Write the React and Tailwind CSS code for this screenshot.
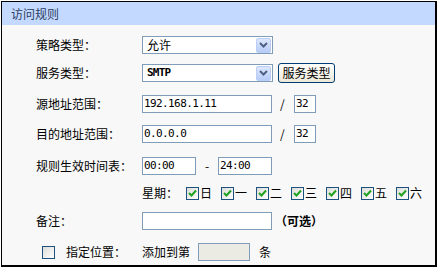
import React from "react";

const cjk = { fontFamily: '"Noto Sans CJK SC", "Noto Sans", sans-serif' };
const mono = { fontFamily: '"DejaVu Sans Mono", "Liberation Mono", monospace' };

const Arrow = () => (
  <span className="ml-auto mr-[1px] flex h-[15px] w-[15px] items-center justify-center rounded-[2px] border border-[#b9cdf5] bg-gradient-to-b from-[#dde7fd] to-[#b7ccf8]">
    <svg width="9" height="6" viewBox="0 0 9 6">
      <path d="M1 1 L4.5 4.5 L8 1" fill="none" stroke="#4d6185" strokeWidth="2" />
    </svg>
  </span>
);

const Select = ({ children, textStyle, className = "" }) => (
  <div className="flex h-[18px] w-[131px] items-center border border-[#7f9db9] bg-white pl-[4px]">
    <span className={className} style={textStyle}>
      {children}
    </span>
    <Arrow />
  </div>
);

const Input = ({ value = "", w = "w-[130px]", disabled = false }) => (
  <div
    className={`flex h-[18px] ${w} items-center border border-[#7f9db9] pl-[1px] text-[11px] tracking-[-0.6px] text-black ${
      disabled ? "bg-[#ebebe4]" : "bg-white"
    }`}
    style={mono}
  >
    {value}
  </div>
);

const Check = ({ checked = true }) => (
  <span className="flex h-[13px] w-[13px] items-center justify-center border border-[#1c5180] bg-gradient-to-br from-[#dcdcd7] to-white">
    {checked && (
      <svg width="9" height="8" viewBox="0 0 9 8">
        <path d="M1 4 L3.5 6.5 L8 1.5" fill="none" stroke="#21a121" strokeWidth="2" />
      </svg>
    )}
  </span>
);

const Label = ({ children }) => <span className="w-[106px] shrink-0">{children}</span>;

const days = ["日", "一", "二", "三", "四", "五", "六"];

export default function App() {
  return (
    <div className="h-[269px] w-[438px] bg-white p-[1px]" style={cjk}>
      <div className="h-[266px] w-[436px] border border-r-2 border-b-2 border-black bg-[#f8f8f8] text-[12px] text-black">
        <div className="flex h-[23px] items-center bg-[#c4d9ff] pl-[9px] text-[12px] text-[#2b3d64]">
          访问规则
        </div>

        <div className="pl-[34px]">
          <div className="mt-[11px] flex h-[18px] items-center">
            <Label>策略类型：</Label>
            <Select>允许</Select>
          </div>

          <div className="mt-[9px] flex h-[20px] items-center">
            <Label>服务类型：</Label>
            <Select className="text-[11px] font-bold tracking-[-0.8px]" textStyle={mono}>
              SMTP
            </Select>
            <button className="ml-[5px] h-[20px] w-[57px] rounded-[3px] border border-[#003c74] bg-gradient-to-b from-white to-[#ece9d8] text-[12px] leading-none text-black">
              服务类型
            </button>
          </div>

          <div className="mt-[12px] flex h-[18px] items-center">
            <Label>源地址范围：</Label>
            <Input value="192.168.1.11" />
            <span className="ml-[8px] w-[14px]">/</span>
            <Input value="32" w="w-[22px]" />
          </div>

          <div className="mt-[12px] flex h-[18px] items-center">
            <Label>目的地址范围：</Label>
            <Input value="0.0.0.0" />
            <span className="ml-[8px] w-[14px]">/</span>
            <Input value="32" w="w-[22px]" />
          </div>

          <div className="mt-[14px] flex h-[18px] items-center">
            <Label>规则生效时间表：</Label>
            <Input value="00:00" w="w-[54px]" />
            <span className="ml-[9px] w-[13px]">-</span>
            <Input value="24:00" w="w-[54px]" />
          </div>

          <div className="mt-[9px] flex h-[18px] items-center">
            <span className="w-[106px] shrink-0" />
            <span className="w-[44px]">星期：</span>
            {days.map((d) => (
              <span key={d} className="flex w-[35px] items-center gap-[1px]">
                <Check />
                <span>{d}</span>
              </span>
            ))}
          </div>

          <div className="mt-[10px] flex h-[18px] items-center">
            <Label>备注：</Label>
            <Input />
            <span className="ml-[3px] font-bold">（可选）</span>
          </div>

          <div className="mt-[13px] flex h-[18px] items-center">
            <span className="ml-[6px] flex w-[100px] shrink-0 items-center">
              <Check checked={false} />
              <span className="ml-[11px]">指定位置：</span>
            </span>
            <span className="w-[56px]">添加到第</span>
            <Input w="w-[52px]" disabled />
            <span className="ml-[9px]">条</span>
          </div>
        </div>
      </div>
    </div>
  );
}
